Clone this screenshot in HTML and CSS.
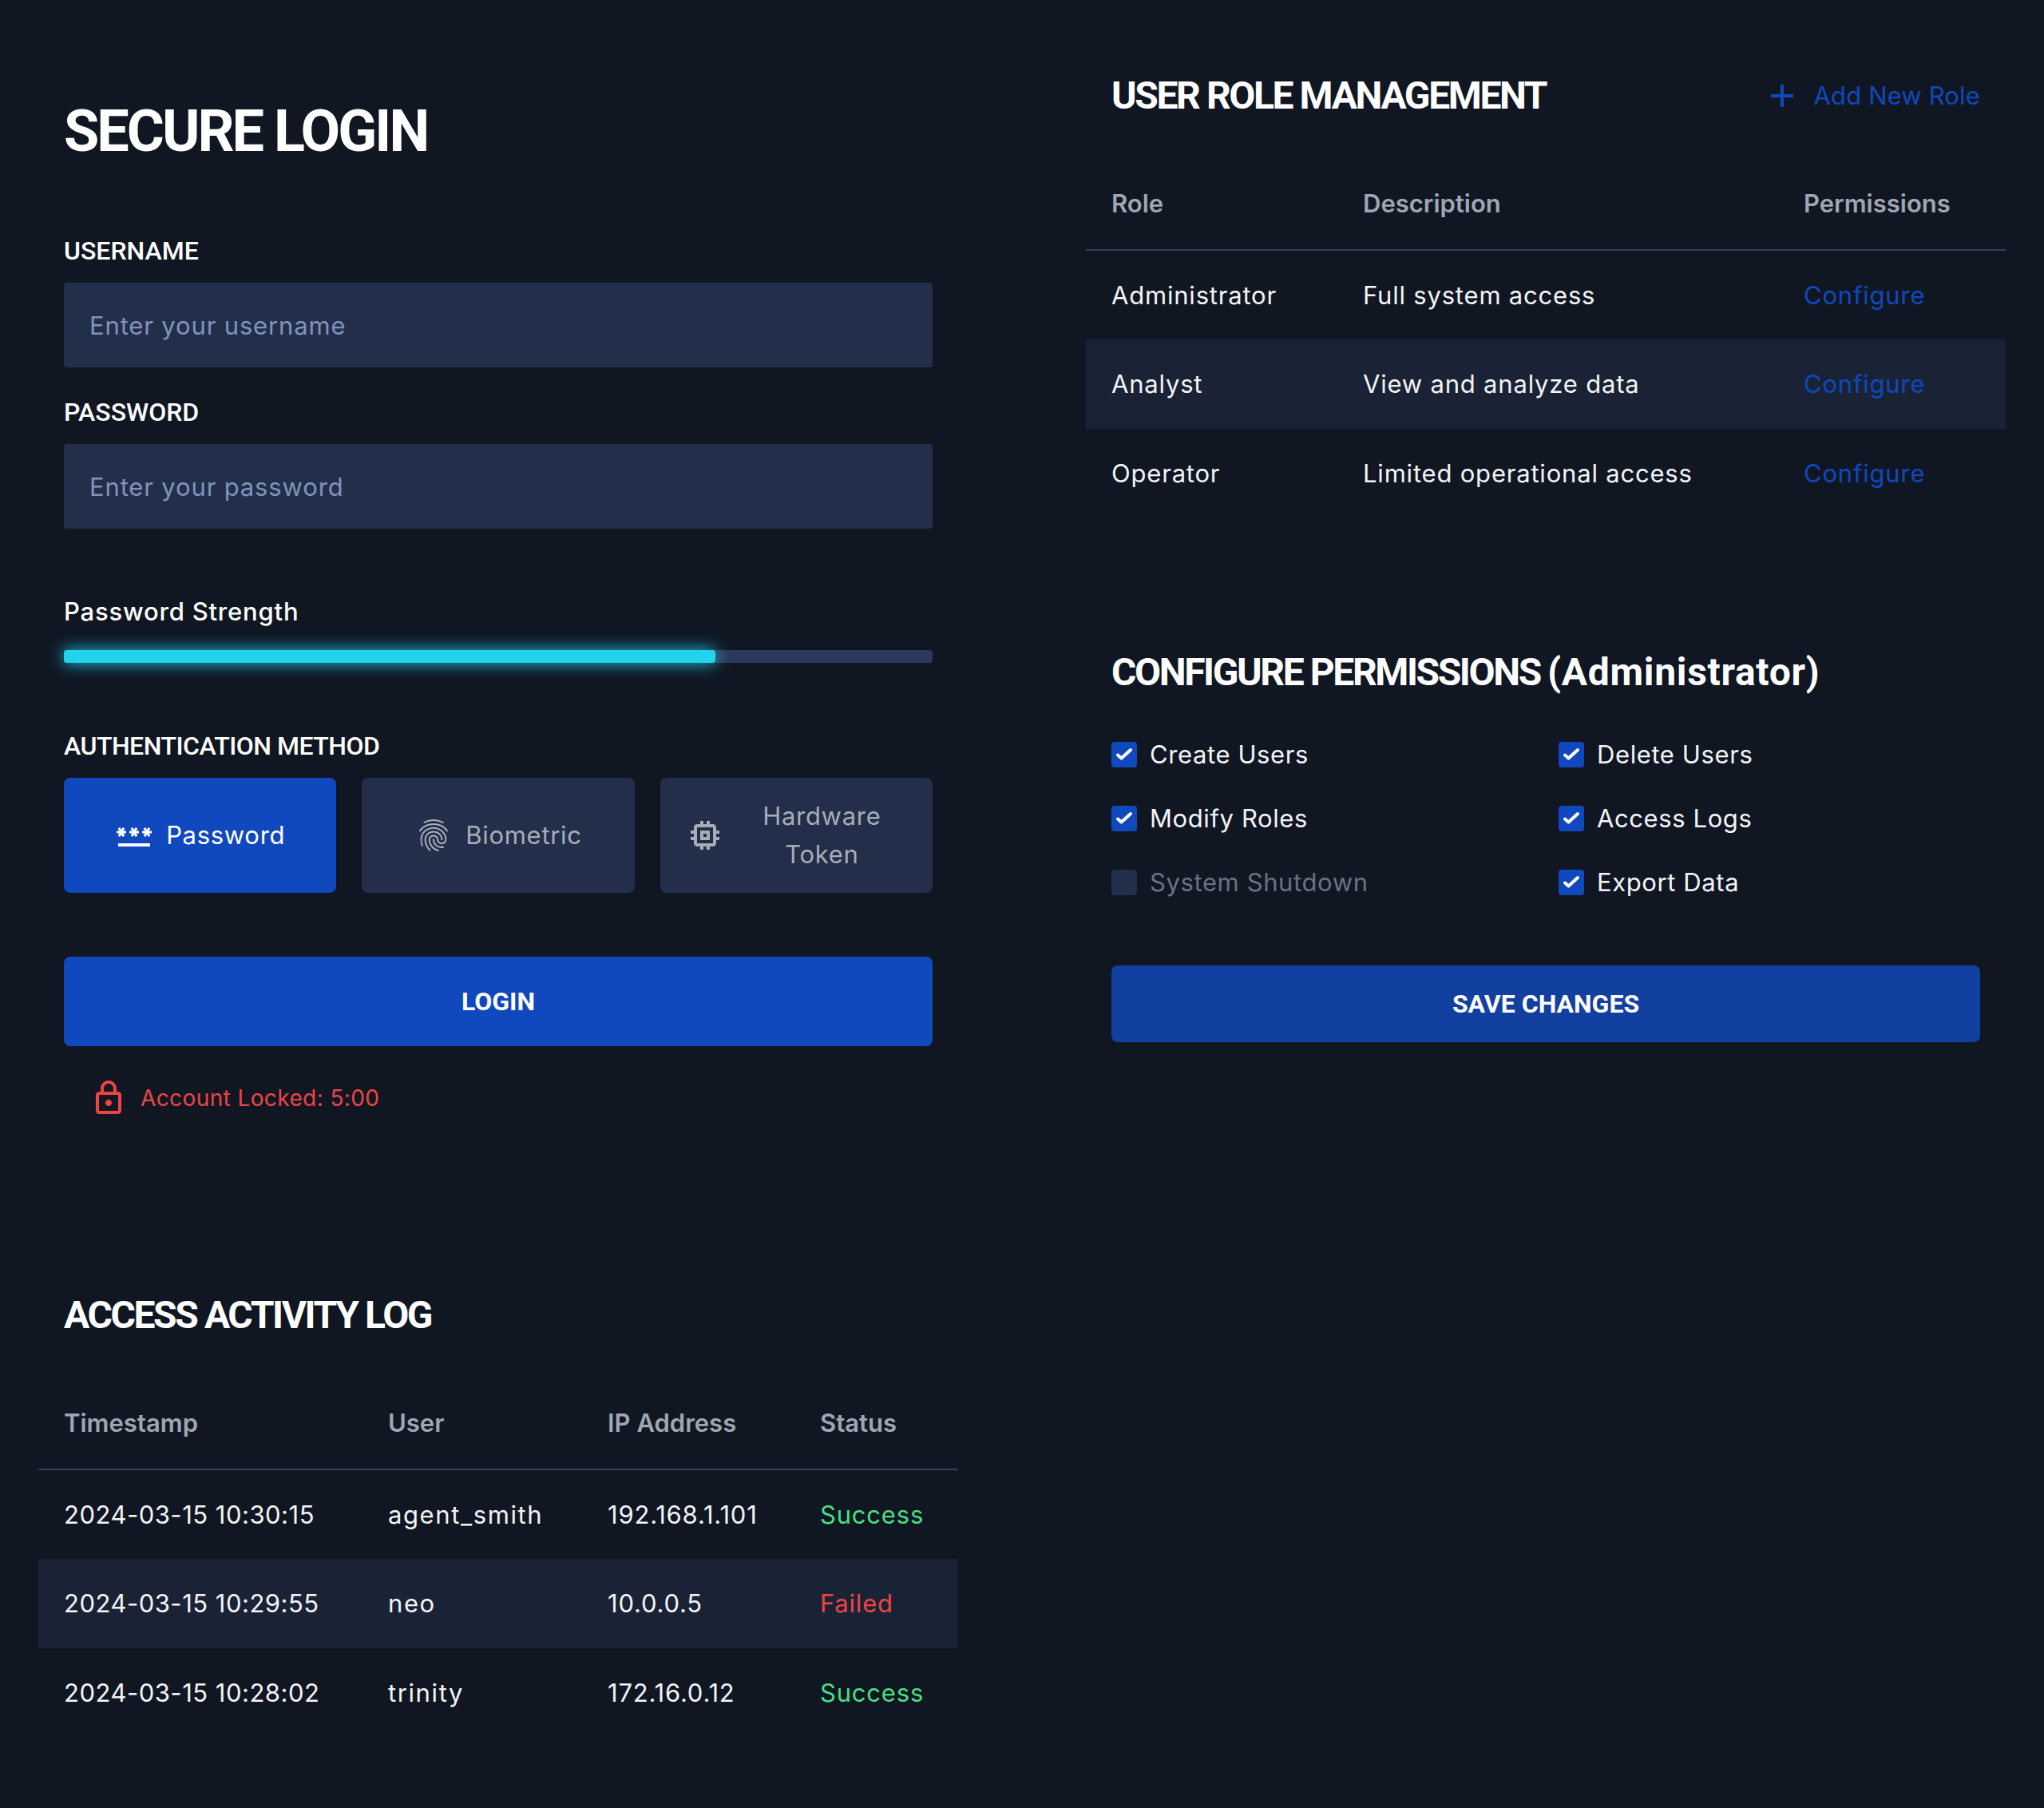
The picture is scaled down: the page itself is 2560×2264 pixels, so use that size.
FILE: index.html
```html
<!DOCTYPE html>
<html lang="en">
<head>
  <meta charset="UTF-8" />
  <title>Secure Login</title>
  <link rel="stylesheet" href="styles.css">
</head>
<body>
  <div class="page">
    <div class="column">
      <section class="login">
        <h1>SECURE LOGIN</h1>
        <label class="field-label" for="username">USERNAME</label>
        <input class="field" type="text" id="username" placeholder="Enter your username" />
        <label class="field-label second" for="password">PASSWORD</label>
        <input class="field" type="text" id="password" placeholder="Enter your password" />

        <div class="strength-label">Password Strength</div>
        <div class="track"><div class="fill"></div></div>

        <div class="field-label method-label">AUTHENTICATION METHOD</div>
        <div class="methods">
          <button class="method active">
            <svg class="icon" viewBox="0 0 24 24"><path d="M2 17h20v2H2zm1.15-4.05L4 11.47l.85 1.48 1.3-.75-.85-1.48H7v-1.5H5.3l.85-1.47L4.85 7 4 8.47 3.15 7l-1.3.75.85 1.47H1v1.5h1.7l-.85 1.48 1.3.75zm6.7-.75l1.3.75.85-1.48.85 1.48 1.3-.75-.85-1.48H15v-1.5h-1.7l.85-1.47-1.3-.75L12 8.47 11.15 7l-1.3.75.85 1.47H9v1.5h1.7l-.85 1.48zM23 9.22h-1.7l.85-1.47-1.3-.75L20 8.47 19.15 7l-1.3.75.85 1.47H17v1.5h1.7l-.85 1.48 1.3.75.85-1.48.85 1.48 1.3-.75-.85-1.48H23v-1.5z"/></svg>
            <span>Password</span>
          </button>
          <button class="method">
            <svg class="icon" viewBox="0 0 24 24"><path d="M17.81 4.47c-.08 0-.16-.02-.23-.06C15.66 3.42 14 3 12.01 3c-1.98 0-3.86.47-5.57 1.41-.24.13-.54.04-.68-.2-.13-.24-.04-.55.2-.68C7.82 2.52 9.86 2 12.01 2c2.13 0 3.99.47 6.03 1.52.25.13.34.43.21.67-.09.18-.26.28-.44.28zM3.5 9.72c-.1 0-.2-.03-.29-.09-.23-.16-.28-.47-.12-.7.99-1.4 2.25-2.5 3.75-3.27C9.98 4.04 14 4.03 17.15 5.65c1.5.77 2.76 1.86 3.75 3.25.16.22.11.54-.12.7-.23.16-.54.11-.7-.12-.9-1.26-2.04-2.25-3.39-2.94-2.87-1.47-6.54-1.47-9.4.01-1.36.7-2.5 1.7-3.4 2.96-.08.14-.23.21-.39.21zm6.25 12.07c-.13 0-.26-.05-.35-.15-.87-.87-1.34-1.43-2.01-2.64-.69-1.23-1.05-2.73-1.05-4.34 0-2.97 2.54-5.39 5.66-5.39s5.66 2.42 5.66 5.39c0 .28-.22.5-.5.5s-.5-.22-.5-.5c0-2.42-2.09-4.39-4.66-4.39-2.57 0-4.66 1.97-4.66 4.39 0 1.44.32 2.77.93 3.85.64 1.15 1.08 1.64 1.85 2.42.19.2.19.51 0 .71-.11.1-.24.15-.37.15zm7.17-1.85c-1.19 0-2.24-.3-3.1-.89-1.49-1.01-2.38-2.65-2.38-4.39 0-.28.22-.5.5-.5s.5.22.5.5c0 1.41.72 2.74 1.94 3.56.71.48 1.54.71 2.54.71.24 0 .64-.03 1.04-.1.27-.05.53.13.58.41.05.27-.13.53-.41.58-.57.11-1.07.12-1.21.12zM14.91 22c-.04 0-.09-.01-.13-.02-1.59-.44-2.63-1.03-3.72-2.1-1.4-1.39-2.17-3.24-2.17-5.22 0-1.62 1.38-2.94 3.08-2.94 1.7 0 3.08 1.32 3.08 2.94 0 1.07.93 1.94 2.08 1.94s2.08-.87 2.08-1.94c0-3.77-3.25-6.83-7.25-6.83-2.84 0-5.44 1.58-6.61 4.03-.39.81-.59 1.76-.59 2.8 0 .78.07 2.01.67 3.61.1.26-.03.55-.29.64-.26.1-.55-.04-.64-.29-.49-1.31-.73-2.61-.73-3.96 0-1.2.23-2.29.68-3.24 1.33-2.79 4.28-4.6 7.51-4.6 4.55 0 8.25 3.51 8.25 7.83 0 1.62-1.38 2.94-3.08 2.94s-3.08-1.32-3.08-2.94c0-1.07-.93-1.94-2.08-1.94s-2.08.87-2.08 1.94c0 1.71.66 3.31 1.87 4.51.95.94 1.86 1.46 3.27 1.85.27.07.42.35.35.61-.05.23-.26.38-.47.38z"/></svg>
            <span>Biometric</span>
          </button>
          <button class="method">
            <svg class="icon" viewBox="0 0 24 24"><path d="M15 9H9v6h6V9zm-2 4h-2v-2h2v2zm8-2V9h-2V7c0-1.1-.9-2-2-2h-2V3h-2v2h-2V3H9v2H7c-1.1 0-2 .9-2 2v2H3v2h2v2H3v2h2v2c0 1.1.9 2 2 2h2v2h2v-2h2v2h2v-2h2c1.1 0 2-.9 2-2v-2h2v-2h-2v-2h2zm-4 6H7V7h10v10z"/></svg>
            <span>Hardware<br>Token</span>
          </button>
        </div>

        <button class="login-btn">LOGIN</button>
        <div class="locked">
          <svg class="icon" viewBox="0 0 24 24"><path d="M18 8h-1V6c0-2.76-2.24-5-5-5S7 3.24 7 6v2H6c-1.1 0-2 .9-2 2v10c0 1.1.9 2 2 2h12c1.1 0 2-.9 2-2V10c0-1.1-.9-2-2-2zM9 6c0-1.66 1.34-3 3-3s3 1.34 3 3v2H9V6zm9 14H6V10h12v10zm-6-3c1.1 0 2-.9 2-2s-.9-2-2-2-2 .9-2 2 .9 2 2 2z"/></svg>
          <span>Account Locked: 5:00</span>
        </div>
      </section>

      <section class="activity">
        <h2>ACCESS ACTIVITY LOG</h2>
        <table class="log-table">
          <colgroup>
            <col class="log-time"><col class="log-user"><col class="log-ip"><col class="log-status">
          </colgroup>
          <thead>
            <tr><th>Timestamp</th><th>User</th><th>IP Address</th><th>Status</th></tr>
          </thead>
          <tbody>
            <tr><td>2024-03-15 10:30:15</td><td>agent_smith</td><td>192.168.1.101</td><td class="ok">Success</td></tr>
            <tr><td>2024-03-15 10:29:55</td><td>neo</td><td>10.0.0.5</td><td class="bad">Failed</td></tr>
            <tr><td>2024-03-15 10:28:02</td><td>trinity</td><td>172.16.0.12</td><td class="ok">Success</td></tr>
          </tbody>
        </table>
      </section>
    </div>

    <div class="column">
      <section class="roles">
        <div class="roles-head">
          <h2>USER ROLE MANAGEMENT</h2>
          <a class="add-role">
            <svg class="icon" viewBox="0 0 24 24"><path d="M19 13h-6v6h-2v-6H5v-2h6V5h2v6h6v2z"/></svg>
            <span>Add New Role</span>
          </a>
        </div>
        <table class="role-table">
          <colgroup>
            <col class="role-name"><col class="role-desc"><col class="role-perm">
          </colgroup>
          <thead>
            <tr><th>Role</th><th>Description</th><th>Permissions</th></tr>
          </thead>
          <tbody>
            <tr><td>Administrator</td><td>Full system access</td><td><a class="configure">Configure</a></td></tr>
            <tr><td>Analyst</td><td>View and analyze data</td><td><a class="configure">Configure</a></td></tr>
            <tr><td>Operator</td><td>Limited operational access</td><td><a class="configure">Configure</a></td></tr>
          </tbody>
        </table>
      </section>

      <section class="perms">
        <h2>CONFIGURE PERMISSIONS <span class="perm-role">(Administrator)</span></h2>
        <div class="perm-grid">
          <div class="perm"><span class="box on"><svg viewBox="0 0 32 32"><path d="M8 16.5l4.5 4L24 10"/></svg></span>Create Users</div>
          <div class="perm"><span class="box on"><svg viewBox="0 0 32 32"><path d="M8 16.5l4.5 4L24 10"/></svg></span>Delete Users</div>
          <div class="perm"><span class="box on"><svg viewBox="0 0 32 32"><path d="M8 16.5l4.5 4L24 10"/></svg></span>Modify Roles</div>
          <div class="perm"><span class="box on"><svg viewBox="0 0 32 32"><path d="M8 16.5l4.5 4L24 10"/></svg></span>Access Logs</div>
          <div class="perm off"><span class="box"></span>System Shutdown</div>
          <div class="perm"><span class="box on"><svg viewBox="0 0 32 32"><path d="M8 16.5l4.5 4L24 10"/></svg></span>Export Data</div>
        </div>
        <button class="save-btn">SAVE CHANGES</button>
      </section>
    </div>
  </div>
</body>
</html>
```

FILE: styles.css
```css
* {
  box-sizing: border-box;
}
body {
  margin: 0;
  background: #101723;
  color: #f3f4f6;
  font-family: Inter, "Liberation Sans", sans-serif;
  font-size: 31px;
  line-height: 48px;
  letter-spacing: 0.8px;
}
button {
  font-family: inherit;
  border: none;
}
h1, h2 {
  margin: 0;
  color: #fff;
  font-family: Roboto, "Liberation Sans", sans-serif;
  font-weight: 700;
}
h1 {
  font-size: 72px;
  line-height: 102px;
  letter-spacing: -3px;
}
h2 {
  font-size: 48px;
  line-height: 72px;
  letter-spacing: -2.4px;
}
.perm-role {
  letter-spacing: 0.7px;
}
.icon {
  width: 48px;
  height: 48px;
  flex: none;
  fill: currentColor;
}
.page {
  display: grid;
  grid-template-columns: 1152px 1152px;
  column-gap: 160px;
  padding: 0 48px;
  height: 2264px;
}

/* login form */
.login {
  padding: 114px 32px 0;
}
.field-label {
  display: block;
  margin: 74px 0 16px;
  font-family: Roboto, "Liberation Sans", sans-serif;
  font-size: 32px;
  font-weight: 500;
  letter-spacing: 0;
  color: #fff;
}
.second {
  margin-top: 32px;
}
.field {
  display: block;
  width: 100%;
  height: 106px;
  padding: 0 32px;
  background: #232f4a;
  border: none;
  border-radius: 4px;
  color: #fff;
  font-family: inherit;
  font-size: 31px;
  letter-spacing: 0.85px;
}
.field::placeholder {
  color: #8094bb;
  opacity: 1;
}
.strength-label {
  margin-top: 80px;
  color: #fff;
  font-weight: 500;
}
.track {
  height: 16px;
  margin-top: 24px;
  background: #2a3a5c;
  border-radius: 4px;
}
.fill {
  width: 75%;
  height: 100%;
  background: #22d3ee;
  border-radius: 4px;
  box-shadow: 0 0 20px #22d3ee;
}
.method-label {
  margin-top: 80px;
  letter-spacing: -0.5px;
}
.methods {
  display: grid;
  grid-template-columns: repeat(3, 1fr);
  gap: 32px;
}
.method {
  display: flex;
  align-items: center;
  justify-content: center;
  gap: 16px;
  height: 144px;
  padding: 0 32px;
  background: #232f4a;
  border-radius: 8px;
  color: #a7adb9;
  font-size: 31px;
  line-height: 48px;
  letter-spacing: 0.7px;
}
.method span {
  flex: 0 1 auto;
}
.method:last-child span {
  flex: 1;
}
.method.active {
  background: #1048bd;
  color: #fff;
}
.login-btn {
  display: block;
  width: 100%;
  height: 112px;
  margin-top: 80px;
  background: #1048bd;
  border-radius: 8px;
  color: #fff;
  font-family: Roboto, "Liberation Sans", sans-serif;
  font-size: 32px;
  font-weight: 700;
}
.locked {
  display: flex;
  align-items: center;
  gap: 16px;
  margin-top: 41px;
  padding-left: 32px;
  color: #ef4444;
  font-size: 28px;
  letter-spacing: 0.4px;
}

/* tables */
table {
  width: 100%;
  border-collapse: collapse;
  table-layout: fixed;
}
th {
  height: 116px;
  padding: 0 32px;
  text-align: left;
  color: #a0a6b2;
  font-size: 31px;
  font-weight: 600;
  letter-spacing: 0;
  border-bottom: 2px solid #374151;
}
td {
  height: 112px;
  padding: 0 32px;
  white-space: nowrap;
}
tbody tr:nth-child(2) {
  background: #1a2335;
}
.log-table td:first-child {
  letter-spacing: 0.5px;
}
.log-table td:nth-child(2) {
  letter-spacing: 1.6px;
}
.ok {
  color: #4ade80;
}
.bad {
  color: #ef4444;
}
.configure {
  color: #1048bd;
}
.log-time { width: 406px; }
.log-user { width: 275px; }
.log-ip { width: 266px; }
.log-status { width: 205px; }
.role-name { width: 315px; }
.role-desc { width: 552px; }
.role-perm { width: 285px; }

/* activity log */
.activity {
  margin-top: 212px;
}
.activity h2 {
  padding: 0 32px;
}
.log-table {
  margin-top: 41px;
}

/* roles */
.roles {
  padding-top: 84px;
}
.roles-head {
  display: flex;
  justify-content: space-between;
  align-items: center;
  padding: 0 32px;
}
.add-role {
  display: flex;
  align-items: center;
  gap: 16px;
  color: #1048bd;
  letter-spacing: 0.15px;
}
.role-table {
  margin-top: 41px;
}

/* permissions */
.perms {
  margin-top: 157px;
  padding: 0 32px;
}
.perm-grid {
  display: grid;
  grid-template-columns: 1fr 1fr;
  gap: 32px;
  margin-top: 43px;
}
.perm {
  display: flex;
  align-items: center;
  gap: 16px;
  color: #f3f4f6;
  letter-spacing: 0.6px;
}
.perm.off {
  color: #6b7280;
}
.box {
  width: 32px;
  height: 32px;
  flex: none;
  background: #232f4a;
  border-radius: 4px;
}
.box.on {
  background: #1048bd;
}
.box svg {
  display: block;
  fill: none;
  stroke: #fff;
  stroke-width: 4;
  stroke-linecap: round;
  stroke-linejoin: round;
}
.save-btn {
  display: block;
  width: 100%;
  height: 96px;
  margin-top: 80px;
  background: #1240a0;
  border-radius: 8px;
  color: #fff;
  font-family: Roboto, "Liberation Sans", sans-serif;
  font-size: 32px;
  font-weight: 700;
}
```
